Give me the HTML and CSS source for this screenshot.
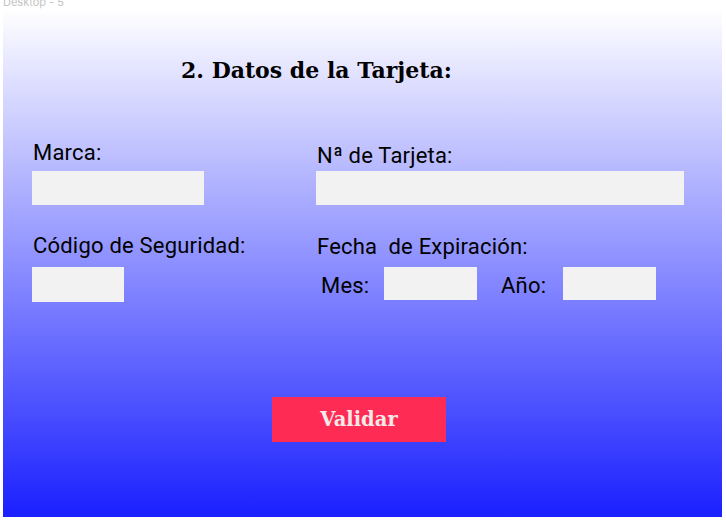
FILE: index.html
```html
<!DOCTYPE html>
<html lang="es">
<head>
<meta charset="utf-8">
<title>Datos de la Tarjeta</title>
<link rel="stylesheet" href="styles.css">
</head>
<body>
<div class="caption">Desktop - 5</div>
<main class="frame">
  <h1 class="title">2. Datos de la Tarjeta:</h1>
  <section class="grid">
    <div class="field">
      <label class="lbl">Marca:</label>
      <div class="box box-marca"></div>
    </div>
    <div class="field">
      <label class="lbl lbl-low">Nª de Tarjeta:</label>
      <div class="box box-num"></div>
    </div>
    <div class="field field-b">
      <label class="lbl">Código de Seguridad:</label>
      <div class="box box-cvv"></div>
    </div>
    <div class="field field-b">
      <label class="lbl lbl-fecha">Fecha&nbsp; de Expiración:</label>
      <div class="exp">
        <span class="sub sub-mes">Mes:</span>
        <div class="box box-small"></div>
        <span class="sub sub-ano">Año:</span>
        <div class="box box-small"></div>
      </div>
    </div>
  </section>
  <div class="actions">
    <button class="btn" type="button">Validar</button>
  </div>
</main>
</body>
</html>
```
FILE: styles.css
```css
html, body { margin: 0; padding: 0; background: #ffffff; }
body { font-family: Roboto, "Liberation Sans", sans-serif; color: #000; }

.caption {
  height: 9px;
  line-height: 5px;
  padding-left: 3px;
  font-family: Inter, "Liberation Sans", sans-serif;
  font-size: 11px;
  color: #c4c4c4;
  overflow: visible;
}

.frame {
  margin-left: 3px;
  width: 719px;
  height: 508px;
  box-sizing: border-box;
  padding-top: 49px;
  background: linear-gradient(180deg, #ffffff 0%, #1a20ff 100%);
  display: flex;
  flex-direction: column;
}

.title {
  margin: 0;
  padding-left: 178px;
  font-family: "DejaVu Serif", "Liberation Serif", serif;
  font-weight: 900;
  font-size: 22px;
  line-height: 25px;
  color: #000;
}

.grid {
  margin-top: 58px;
  padding-left: 29px;
  display: grid;
  grid-template-columns: 284px 1fr;
  row-gap: 29px;
}

.field {
  display: flex;
  flex-direction: column;
  align-items: flex-start;
  gap: 6px;
}
.field-b { gap: 9px; }

.lbl {
  font-size: 22px;
  line-height: 24px;
  letter-spacing: 0.2px;
  padding-left: 1px;
}
.lbl-low { margin-top: 3px; margin-bottom: -3px; }
.lbl-fecha { margin-top: 1px; margin-bottom: -1px; }

.box { background: #f2f2f2; }
.box-marca { width: 172px; height: 34px; }
.box-num { width: 368px; height: 34px; }
.box-cvv { width: 92px; height: 35px; }
.box-small { width: 93px; height: 33px; }

.exp {
  display: flex;
  align-items: center;
}
.sub {
  font-size: 22px;
  line-height: 24px;
  letter-spacing: 0.2px;
  padding-top: 4px;
  box-sizing: border-box;
}
.sub-mes { width: 68px; padding-left: 5px; }
.sub-ano { width: 86px; padding-left: 24px; }

.actions {
  margin-top: 95px;
  padding-left: 269px;
  display: flex;
}
.btn {
  width: 174px;
  height: 45px;
  border: 0;
  padding: 0;
  background: #fe2c55;
  color: #f3e9e9;
  font-family: "DejaVu Serif", "Liberation Serif", serif;
  font-weight: 700;
  font-size: 19.5px;
  cursor: pointer;
}
```
